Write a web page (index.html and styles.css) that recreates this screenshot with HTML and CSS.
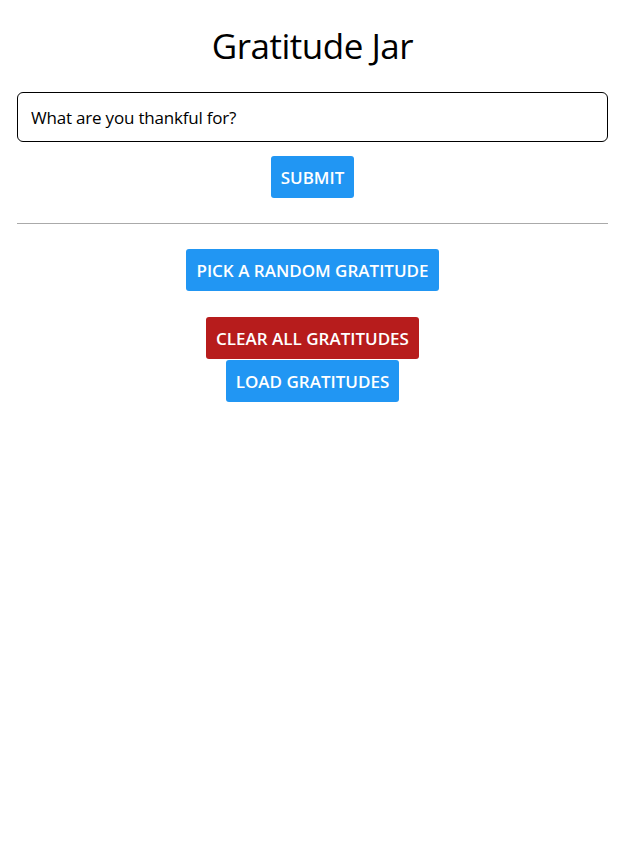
FILE: index.html
```html
<!DOCTYPE html>
<html>
<head>
<meta charset="utf-8">
<link rel="stylesheet" href="styles.css">
</head>
<body>
<main class="app">
  <h1 class="title">Gratitude Jar</h1>
  <form class="entry">
    <input class="entry-input" type="text" placeholder="What are you thankful for?">
    <button class="btn btn-blue" type="button">Submit</button>
  </form>
  <hr class="divider">
  <div class="actions">
    <button class="btn btn-blue" type="button">Pick a random gratitude</button>
    <div class="stack">
      <button class="btn btn-red" type="button">Clear all gratitudes</button>
      <button class="btn btn-blue" type="button">Load gratitudes</button>
    </div>
  </div>
</main>
</body>
</html>
```

FILE: styles.css
```css
html, body {
  margin: 0;
  padding: 0;
  background: #fff;
}
body {
  font-family: "Open Sans", "Noto Sans", sans-serif;
  color: #000;
}
.app {
  padding: 0 18px 0 17px;
  display: flex;
  flex-direction: column;
}
.title {
  margin: 0;
  height: 92px;
  box-sizing: border-box;
  padding-top: 22px;
  text-align: center;
  font-size: 35px;
  font-weight: 400;
  line-height: 48px;
  letter-spacing: -0.5px;
}
.entry {
  margin: 0;
  display: flex;
  flex-direction: column;
  align-items: center;
  gap: 14px;
}
.entry-input {
  width: 100%;
  box-sizing: border-box;
  height: 50px;
  border: 1px solid #000;
  border-radius: 6px;
  padding: 0 13px;
  font-family: inherit;
  font-size: 17px;
  letter-spacing: -0.2px;
  color: #000;
  outline: none;
}
.entry-input::placeholder {
  color: #000;
  opacity: 1;
}
.btn {
  height: 42px;
  padding: 0 10px;
  border: none;
  border-radius: 3px;
  color: #fff;
  font-family: inherit;
  font-size: 17px;
  font-weight: 600;
  text-transform: uppercase;
  letter-spacing: 0;
  cursor: pointer;
}
.btn-blue {
  background: #2196f3;
}
.btn-red {
  background: #b71c1c;
}
.divider {
  margin: 25px 0 0 0;
  border: none;
  border-top: 1px solid #aaa;
  height: 0;
}
.actions {
  margin-top: 25px;
  display: flex;
  flex-direction: column;
  align-items: center;
  gap: 26px;
}
.stack {
  display: flex;
  flex-direction: column;
  align-items: center;
  gap: 1px;
}
```
